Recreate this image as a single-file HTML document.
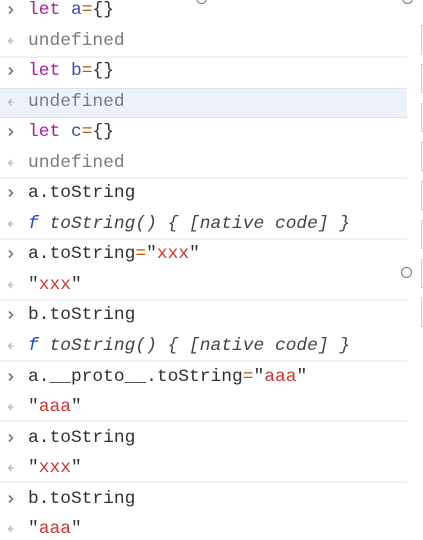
<!DOCTYPE html>
<html><head><style>
html,body{margin:0;padding:0;width:423px;height:540px;overflow:hidden;background:#fff;position:relative}
.l{position:absolute;left:0;width:407px;height:30px;font:17.9px/30px "Liberation Mono",monospace;color:#303030;white-space:pre}
.l .t{position:absolute;left:28px;top:0}
.p{position:absolute;left:7px;top:10px;width:7px;height:10px}
.sep{position:absolute;left:0;width:407px;height:2px;background:#f2f2f2}
.k{color:#b5179e}.v{color:#3a49b8}.o{color:#b35b13}.g{color:#7a7a7a}.s{color:#d03535}.q{color:#333}
.i{font-style:italic;color:#444}.f{color:#1a4ad0;font-style:italic}
.hl{position:absolute;left:0;top:88px;width:407px;height:28px;background:#edf2fa;border-top:1px solid #d6e3f5;border-bottom:1px solid #d6e3f5}
.box{position:absolute;left:421px;width:4px;height:27px;border:1px solid #cfcfcf;border-right:none}
.c{position:absolute;width:9px;height:9px;border:1px solid #777;border-radius:50%}
</style></head><body>
<svg width="0" height="0" style="position:absolute"><defs>
<symbol id="in" viewBox="0 0 7 10"><path d="M2 1.5 L5.5 5 L2 8.5" fill="none" stroke="#777" stroke-width="1.6"/></symbol>
<symbol id="out" viewBox="0 0 7 10"><path d="M4.5 2 L1.5 5 L4.5 8 M1.5 5 L6.5 5" fill="none" stroke="#bbb" stroke-width="1.3"/></symbol>
</defs></svg>
<div class="hl"></div>
<div class="l" style="top:-5px"><svg class="p"><use href="#in"/></svg><span class="t"><span class="k">let</span> <span class="v">a</span><span class="o">=</span>{}</span></div>
<div class="l" style="top:26px"><svg class="p"><use href="#out"/></svg><span class="t g">undefined</span></div>
<div class="sep" style="top:56px"></div>
<div class="l" style="top:56px"><svg class="p"><use href="#in"/></svg><span class="t"><span class="k">let</span> <span class="v">b</span><span class="o">=</span>{}</span></div>
<div class="l" style="top:87px"><svg class="p"><use href="#out"/></svg><span class="t g">undefined</span></div>
<div class="l" style="top:117px"><svg class="p"><use href="#in"/></svg><span class="t"><span class="k">let</span> <span class="v">c</span><span class="o">=</span>{}</span></div>
<div class="l" style="top:148px"><svg class="p"><use href="#out"/></svg><span class="t g">undefined</span></div>
<div class="sep" style="top:177px"></div>
<div class="l" style="top:178px"><svg class="p"><use href="#in"/></svg><span class="t">a.toString</span></div>
<div class="l" style="top:209px"><svg class="p"><use href="#out"/></svg><span class="t"><span class="f">f</span> <span class="i">toString() { [native code] }</span></span></div>
<div class="sep" style="top:238px"></div>
<div class="l" style="top:239px"><svg class="p"><use href="#in"/></svg><span class="t">a.toString<span class="o">=</span><span class="q">"</span><span class="s">xxx</span><span class="q">"</span></span></div>
<div class="l" style="top:270px"><svg class="p"><use href="#out"/></svg><span class="t"><span class="q">"</span><span class="s">xxx</span><span class="q">"</span></span></div>
<div class="sep" style="top:299px"></div>
<div class="l" style="top:300px"><svg class="p"><use href="#in"/></svg><span class="t">b.toString</span></div>
<div class="l" style="top:331px"><svg class="p"><use href="#out"/></svg><span class="t"><span class="f">f</span> <span class="i">toString() { [native code] }</span></span></div>
<div class="sep" style="top:360px"></div>
<div class="l" style="top:362px"><svg class="p"><use href="#in"/></svg><span class="t">a.__proto__.toString<span class="o">=</span><span class="q">"</span><span class="s">aaa</span><span class="q">"</span></span></div>
<div class="l" style="top:392px"><svg class="p"><use href="#out"/></svg><span class="t"><span class="q">"</span><span class="s">aaa</span><span class="q">"</span></span></div>
<div class="sep" style="top:420px"></div>
<div class="l" style="top:423px"><svg class="p"><use href="#in"/></svg><span class="t">a.toString</span></div>
<div class="l" style="top:453px"><svg class="p"><use href="#out"/></svg><span class="t"><span class="q">"</span><span class="s">xxx</span><span class="q">"</span></span></div>
<div class="sep" style="top:481px"></div>
<div class="l" style="top:484px"><svg class="p"><use href="#in"/></svg><span class="t">b.toString</span></div>
<div class="l" style="top:514px"><svg class="p"><use href="#out"/></svg><span class="t"><span class="q">"</span><span class="s">aaa</span><span class="q">"</span></span></div>
<div class="box" style="top:25px"></div>
<div class="box" style="top:64px"></div>
<div class="box" style="top:103px"></div>
<div class="box" style="top:142px"></div>
<div class="box" style="top:181px"></div>
<div class="box" style="top:220px"></div>
<div class="box" style="top:259px"></div>
<div class="box" style="top:298px"></div>
<div class="c" style="left:196px;top:-7px"></div>
<div class="c" style="left:402px;top:-7px"></div>
<div class="c" style="left:401px;top:267px"></div>
</body></html>
